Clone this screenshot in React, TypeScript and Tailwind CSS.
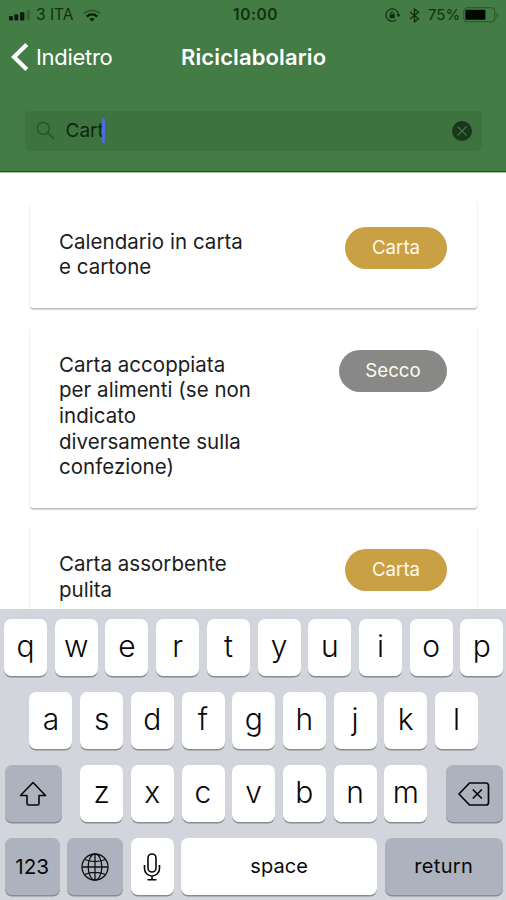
import type { ReactNode } from "react"
import clsx from "clsx"

type Item = { name: string; bin: "Carta" | "Secco" }

const ITEMS: Item[] = [
  { name: "Calendario in carta e cartone", bin: "Carta" },
  { name: "Carta accoppiata per alimenti (se non indicato diversamente sulla confezione)", bin: "Secco" },
  { name: "Carta assorbente pulita", bin: "Carta" },
]

const BIN_STYLE = {
  Carta: "w-[102px] bg-[#c9a044]",
  Secco: "w-[108px] bg-[#888886]",
}

function StatusBar() {
  return (
    <div className="relative flex h-[30px] items-center justify-between pl-[9px] pr-[6px] text-[15.5px] text-[#12300f]">
      <div className="flex items-center">
        <svg width="22" height="11" viewBox="0 0 22 11" fill="#0b1f0b">
          <rect x="0" y="6" width="4" height="4.5" rx="1" />
          <rect x="5.3" y="4.3" width="4" height="6.2" rx="1" />
          <rect x="11" y="2" width="4.4" height="8.5" rx="1" />
          <rect x="17.5" y="0" width="3.6" height="10.5" rx="1" opacity=".25" />
        </svg>
        <span className="ml-[5px] w-[38px] whitespace-nowrap">3 ITA</span>
        <svg className="ml-[9px]" width="18" height="13" viewBox="0 0 18 13" fill="none" stroke="#0b1f0b">
          <path d="M1 4.6C5.5.4 12.5.4 17 4.6" strokeWidth="2" opacity=".35" />
          <path d="M3.8 7.6C6.8 4.7 11.2 4.7 14.2 7.6" strokeWidth="2.2" />
          <path d="M9 12.6 6.3 9.9C7.8 8.6 10.2 8.6 11.7 9.9Z" fill="#0b1f0b" stroke="none" />
        </svg>
      </div>
      <span className="absolute left-[233px] text-[15.5px] font-semibold tracking-[0.6px]">10:00</span>
      <div className="flex items-center">
        <svg width="16" height="14" viewBox="0 0 16 14" fill="none" stroke="#12300f">
          <path d="M13.4 7a6.2 6.2 0 1 0-2 4.6" strokeWidth="1.2" />
          <path d="M11.4 6.3h4.2l-2.1 3z" fill="#12300f" stroke="none" />
          <rect x="4.6" y="6.2" width="5.2" height="4" fill="#12300f" stroke="none" />
          <path d="M5.7 6.5V5.3a1.5 1.5 0 0 1 3 0v1.2" strokeWidth="1" />
        </svg>
        <svg className="ml-[8px]" width="11" height="15" viewBox="0 0 11 15" fill="none" stroke="#12300f" strokeWidth="1.4">
          <path d="M1 4l8.5 6.8-4 3V1.2l4 3L1 11" />
        </svg>
        <span className="ml-[8px] w-[33px] whitespace-nowrap text-[15px]">75%</span>
        <svg className="ml-[2px]" width="37" height="16" viewBox="0 0 37 16">
          <rect x=".8" y=".8" width="31" height="14" rx="3.5" fill="none" stroke="#12300f" strokeOpacity=".5" strokeWidth="1.1" />
          <rect x="2.4" y="2.8" width="20" height="10" rx="1" fill="#020802" />
          <path d="M33.5 5.5c2 .8 2 4.2 0 5z" fill="#12300f" opacity=".5" />
        </svg>
      </div>
    </div>
  )
}

function Header() {
  return (
    <header className="h-[173px] shrink-0 border-b border-[#a5c8a5] bg-[#437c45]">
      <div className="h-full border-b border-[#135c18]">
        <StatusBar />
        <div className="relative flex h-[54px] items-center pl-[11px] text-white">
          <svg width="18" height="28" viewBox="0 0 18 28" fill="none" stroke="#fff" strokeWidth="4.2">
            <path d="M15.8 1.6 3 14l12.8 12.4" />
          </svg>
          <span className="ml-[7px] text-[22px] tracking-[-0.3px]">Indietro</span>
          <h1 className="absolute left-[181px] text-[22px] font-semibold tracking-[0.12px]">Riciclabolario</h1>
        </div>
        <div className="mr-[24px] ml-[25px] mt-[26.500px] flex h-[40px] items-center rounded-[5px] bg-[#3e723f] pl-[11px] pr-[10px]">
          <svg width="19" height="19" viewBox="0 0 19 19" fill="none" stroke="#23542a" strokeWidth="1.3">
            <circle cx="7.3" cy="7.3" r="6" />
            <path d="M11.7 11.7 18 18" strokeWidth="1.6" />
          </svg>
          <span className="ml-[10.5px] w-[36px] pt-[1px] whitespace-nowrap text-[19px] text-[#0b290c]">Cart</span>
          <span className="h-[25px] w-[3px] rounded-full bg-[#4c6cdc]" />
          <svg className="ml-auto" width="20" height="20" viewBox="0 0 20 20">
            <circle cx="10" cy="10" r="10" fill="#19381b" />
            <path d="M5.5 5.5l9 9m0-9l-9 9" stroke="#3e723f" strokeWidth="1.3" />
          </svg>
        </div>
      </div>
    </header>
  )
}

function Card({ name, bin }: Item) {
  return (
    <li className="flex items-start justify-between rounded-[3px] bg-white pt-[27px] pr-[30px] pb-[28px] pl-[29px] shadow-[0_2px_1px_rgba(0,0,0,0.14),0_1px_2px_rgba(0,0,0,0.16)]">
      <p className="w-[197px] text-[20.5px] leading-[25.65px] tracking-[0.03px] text-[#1c1c1c]">{name}</p>
      <span className={clsx("-mt-[2px] flex h-[42px] items-center justify-center rounded-full text-[18.7px] text-[#fffaf0]", BIN_STYLE[bin])}>
        {bin}
      </span>
    </li>
  )
}

function Key({ children, className, dark }: { children: ReactNode; className?: string; dark?: boolean }) {
  return (
    <button
      className={clsx(
        "flex h-[57px] shrink-0 items-center justify-center rounded-[7px] text-[#080808] shadow-[0_1.5px_0_#898c90]",
        dark ? "bg-[#acb3be]" : "bg-white",
        className ?? "w-[43px] pb-[3px] text-[30px] font-light",
      )}
    >
      {children}
    </button>
  )
}

function Letters({ keys }: { keys: string }) {
  return (
    <div className="flex gap-[7.7px]">
      {keys.split("").map((k) => <Key key={k}>{k}</Key>)}
    </div>
  )
}

function Keyboard() {
  return (
    <div className="flex h-[291px] shrink-0 flex-col gap-[16px] bg-[#d2d5db] pt-[10.4px] pr-[3.3px] pl-[4.7px]">
      <div className="flex justify-center"><Letters keys="qwertyuiop" /></div>
      <div className="flex justify-center"><Letters keys="asdfghjkl" /></div>
      <div className="flex justify-between">
        <Key dark className="w-[57px]">
          <svg width="28" height="26" viewBox="0 0 28 26" fill="none" stroke="#080808" strokeWidth="1.6" strokeLinejoin="round">
            <path d="M14 1.5 26.5 14.5H20V22.5a1.5 1.5 0 0 1-1.5 1.5h-9A1.5 1.5 0 0 1 8 22.5V14.5H1.5Z" />
          </svg>
        </Key>
        <Letters keys="zxcvbnm" />
        <Key dark className="w-[57px]">
          <svg width="32" height="24" viewBox="0 0 32 24" fill="none" stroke="#080808" strokeWidth="1.7" strokeLinejoin="round">
            <path d="M11.5 1H28a2.5 2.5 0 0 1 2.5 2.5v17A2.5 2.5 0 0 1 28 23H11.5L1 12Z" />
            <path d="M14.8 7.5l9 9m0-9l-9 9" />
          </svg>
        </Key>
      </div>
      <div className="flex justify-between">
        <Key dark className="w-[55px] text-[20.7px]">123</Key>
        <Key dark className="w-[56px]">
          <svg width="28" height="28" viewBox="0 0 28 28" fill="none" stroke="#111" strokeWidth="1.3">
            <circle cx="14" cy="14" r="13" />
            <ellipse cx="14" cy="14" rx="6.8" ry="13" />
            <path d="M14 1v26M1 14h26M3.5 6.5c6.5 2.6 14.5 2.6 21 0M3.5 21.5c6.5-2.6 14.5-2.6 21 0" />
          </svg>
        </Key>
        <Key className="w-[43px]">
          <svg width="18" height="28" viewBox="0 0 18 28" fill="none" stroke="#080808" strokeWidth="1.6">
            <rect x="5" y="1" width="8" height="18" rx="4" />
            <path d="M1.5 12v3.5a7.5 7.5 0 0 0 15 0V12M9 23v4M4.5 26.8h9" />
          </svg>
        </Key>
        <Key className="w-[196px] pb-[1px] text-[20px] tracking-[0.1px]">space</Key>
        <Key dark className="w-[118px] pb-[1px] text-[20px] tracking-[0.3px]">return</Key>
      </div>
    </div>
  )
}

export default function App() {
  return (
    <div className="flex h-[900px] w-[506px] flex-col overflow-hidden bg-white font-[Inter,sans-serif]">
      <Header />
      <ul className="flex min-h-0 flex-1 flex-col gap-[16.5px] overflow-hidden pt-[28.8px] pr-[29px] pl-[30px]">
        {ITEMS.map((item) => <Card key={item.name} {...item} />)}
      </ul>
      <Keyboard />
    </div>
  )
}
